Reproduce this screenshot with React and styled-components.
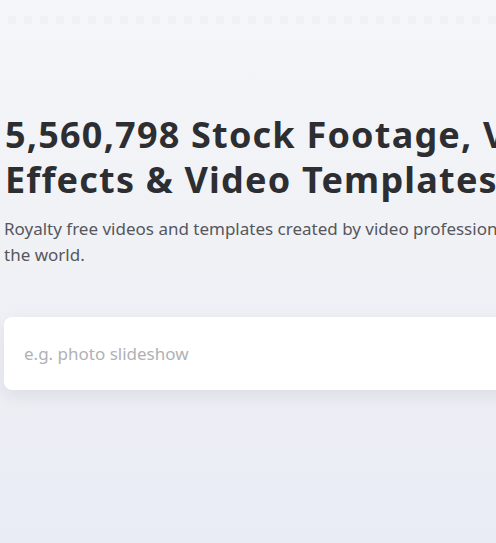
import React from "react";
import styled, { createGlobalStyle } from "styled-components";

const GlobalStyle = createGlobalStyle`
	html, body {
		margin: 0;
		padding: 0;
		overflow: hidden;
	}
	body {
		font-family: "Noto Sans", "Open Sans", sans-serif;
		background: #eceef5;
	}
`;

export default function App() {
	return (
		<>
			<GlobalStyle />
			<Page>
				<TopStrip />
				<Hero>
					<Title>5,560,798 Stock Footage, Video Effects &amp; Video Templates</Title>
					<Subtitle>
						Royalty free videos and templates created by video professionals from
						around the world.
					</Subtitle>
					<SearchBox>
						<SearchInput type="text" placeholder="e.g. photo slideshow" />
					</SearchBox>
				</Hero>
			</Page>
		</>
	);
}

const Page = styled.div`
	min-height: 543px;
	width: 100%;
	background: linear-gradient(180deg, #f5f6f9 0%, #f1f2f6 40%, #edeef4 75%, #e9ecf6 100%);
	display: flex;
	flex-direction: column;
`;

const TopStrip = styled.div`
	height: 8px;
	margin: 16px 0 0 8px;
	background: repeating-linear-gradient(
		90deg,
		#f0f1f5 0px,
		#f0f1f5 8px,
		transparent 8px,
		transparent 16px
	);
`;

const Hero = styled.section`
	width: 648px;
	padding: 88px 0 0 4px;
	display: flex;
	flex-direction: column;
`;

const Title = styled.h1`
	margin: 0;
	font-size: 36px;
	line-height: 45px;
	font-weight: 700;
	letter-spacing: 1.2px;
	color: #2d2e31;
	padding-left: 1px;
`;

const Subtitle = styled.p`
	margin: 14px 0 0;
	font-size: 17px;
	line-height: 26px;
	color: #55575c;
`;

const SearchBox = styled.div`
	margin-top: 49px;
	height: 73px;
	background: #fff;
	border-radius: 8px;
	box-shadow: 0 6px 16px rgba(30, 35, 60, 0.08);
	display: flex;
	align-items: center;
	padding: 0 18px;
`;

const SearchInput = styled.input`
	border: 0;
	outline: none;
	width: 100%;
	font-family: inherit;
	font-size: 17px;
	line-height: 26px;
	color: #333;
	background: transparent;

	&::placeholder {
		color: #b0b1b5;
	}
`;
